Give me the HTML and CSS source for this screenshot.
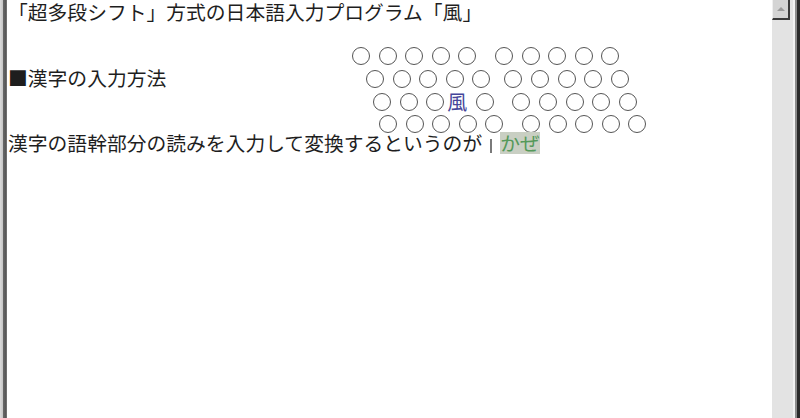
FILE: index.html
```html
<!DOCTYPE html>
<html lang="ja">
<head>
<meta charset="utf-8">
<title>風</title>
<link rel="stylesheet" href="styles.css">
</head>
<body>
<div class="window">
  <div class="edge"></div>
  <div class="content">
    <div class="line first">「超多段シフト」方式の日本語入力プログラム「風」</div>
    <div class="middle">
      <div class="heading">■漢字の入力方法</div>
      <div class="keys">
        <div class="row r1">
          <div class="group"><i class="k"></i><i class="k"></i><i class="k"></i><i class="k"></i><i class="k"></i></div>
          <div class="group"><i class="k"></i><i class="k"></i><i class="k"></i><i class="k"></i><i class="k"></i></div>
        </div>
        <div class="row r2">
          <div class="group"><i class="k"></i><i class="k"></i><i class="k"></i><i class="k"></i><i class="k"></i></div>
          <div class="group"><i class="k"></i><i class="k"></i><i class="k"></i><i class="k"></i><i class="k"></i></div>
        </div>
        <div class="row r3">
          <div class="group"><i class="k"></i><i class="k"></i><i class="k"></i><span class="kaze">風</span><i class="k"></i></div>
          <div class="group"><i class="k"></i><i class="k"></i><i class="k"></i><i class="k"></i><i class="k"></i></div>
        </div>
        <div class="row r4">
          <div class="group"><i class="k"></i><i class="k"></i><i class="k"></i><i class="k"></i><i class="k"></i></div>
          <div class="group"><i class="k"></i><i class="k"></i><i class="k"></i><i class="k"></i><i class="k"></i></div>
        </div>
      </div>
    </div>
    <div class="line">漢字の語幹部分の読みを入力して変換するというのが<span class="caret"></span><span class="conv">かぜ</span></div>
  </div>
  <div class="scroll">
    <div class="track">
      <div class="btn"><span class="arrow"></span></div>
    </div>
    <div class="rim"></div>
  </div>
</div>
</body>
</html>
```

FILE: styles.css
```css
html, body {
  margin: 0;
  padding: 0;
}
body {
  width: 800px;
  height: 418px;
  overflow: hidden;
  background: #fff;
  font-family: "Noto Sans CJK JP", "Noto Sans", sans-serif;
  font-size: 19.8px;
  color: #1e1e1e;
}
.window {
  display: flex;
  height: 418px;
}
.edge {
  flex: none;
  width: 7px;
  background: linear-gradient(to right, #dcdcdc 0, #c4c4c4 3px, #6a6a6a 3px, #555 6px, #8a8a8a 7px);
}
.content {
  flex: 1;
  padding-left: 1px;
  min-width: 0;
}
.line {
  height: 22px;
  line-height: 22px;
  white-space: nowrap;
}
.first {
  padding-top: 1px;
  height: 21px;
  line-height: 21px;
}
.middle {
  display: grid;
  grid-template-columns: 344px auto;
  height: 110px;
}
.heading {
  margin-top: 45px;
  height: 22px;
  line-height: 22px;
  white-space: nowrap;
}
.keys {
  margin-top: 23px;
}
.row {
  display: flex;
  align-items: center;
  height: 22.7px;
  gap: 18.6px;
}
.r2 { padding-left: 14px; gap: 14.1px; }
.r3 { padding-left: 21px; }
.r4 { padding-left: 27px; }
.group {
  display: flex;
  align-items: center;
  gap: 8.6px;
}
.k {
  display: block;
  width: 18px;
  height: 18px;
  box-sizing: border-box;
  border: 1.9px solid #555;
  border-radius: 50%;
}
.kaze {
  display: block;
  width: 20px;
  margin-left: -5.6px;
  font-size: 20px;
  line-height: 22px;
  text-align: center;
  color: #45459a;
}
.caret {
  display: inline-block;
  width: 2px;
  height: 14px;
  margin-left: 8px;
  background: #7a7a7a;
  vertical-align: -2px;
}
.conv {
  display: inline-block;
  margin-left: 8px;
  height: 22px;
  background: #c9cfc3;
  color: #55995a;
}
.scroll {
  flex: none;
  width: 28px;
  display: flex;
}
.track {
  width: 21px;
  background: #e3e3e3;
}
.btn {
  width: 18px;
  height: 20px;
  box-sizing: border-box;
  background: #d4d4d4;
  border-right: 2px solid #3a3a3a;
  border-bottom: 2px solid #3a3a3a;
  border-left: 1px solid #efefef;
  display: flex;
  align-items: center;
  justify-content: center;
}
.arrow {
  width: 0;
  height: 0;
  border-left: 4px solid transparent;
  border-right: 4px solid transparent;
  border-bottom: 4px solid #9a9a9a;
}
.rim {
  width: 7px;
  background: linear-gradient(to right, #f2f2f2 0, #f2f2f2 2px, #8c8c8c 2px, #8c8c8c 4px, #2a2a2a 4px);
}
```
